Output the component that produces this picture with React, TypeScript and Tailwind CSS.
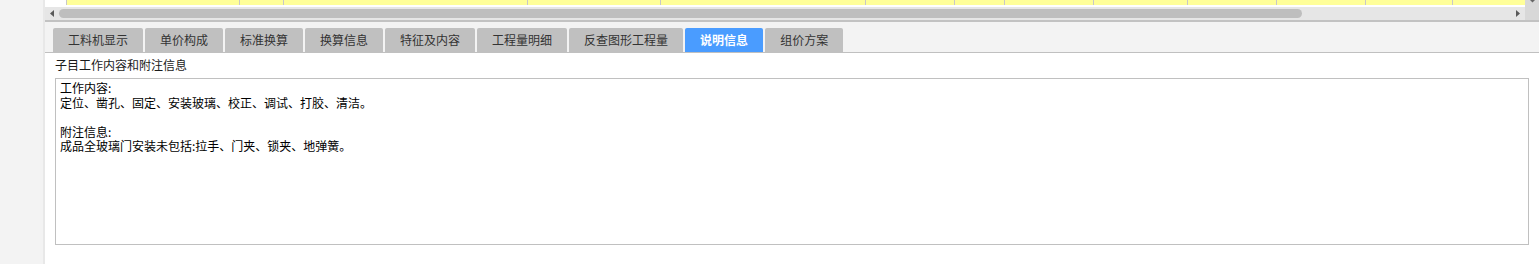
import React from "react";

const tabs = [
  "工料机显示",
  "单价构成",
  "标准换算",
  "换算信息",
  "特征及内容",
  "工程量明细",
  "反查图形工程量",
  "说明信息",
  "组价方案",
];

const cellClasses = [
  "w-[173px]",
  "w-[44px]",
  "w-[244px]",
  "w-[133px]",
  "w-[205px]",
  "w-[89px]",
  "w-[50px]",
  "w-[89px]",
  "w-[94px]",
  "w-[89px]",
  "w-[89px]",
  "w-[87px]",
];

export default function App() {
  return (
    <div className="flex h-[264px] w-[1539px] overflow-hidden bg-white font-['Noto_Sans_CJK_SC','Noto_Sans',sans-serif] text-[12px] text-black">
      <div className="h-full w-[45px] shrink-0 border-r-2 border-[#e8e8e8] bg-[#f3f3f3]" />
      <div className="flex min-w-0 flex-1 flex-col">
        <div className="flex h-[20px]">
          <div className="flex min-w-0 flex-1 flex-col">
            <div className="flex h-[5px] bg-[#ffff99]">
              <div className="h-full w-[22px] border-r border-[#c8c8c8] bg-white" />
              {cellClasses.map((c, i) => (
                <div key={i} className={`h-full ${c} border-r border-[#c8c8c8]`} />
              ))}
              <div className="h-full flex-1" />
            </div>
            <div className="h-[2px] bg-white" />
            <div className="flex h-[13px] items-center bg-[#e6e6e6]">
              <svg className="ml-[5px]" width="4" height="7" viewBox="0 0 4 7">
                <polygon points="4,0 0,3.5 4,7" fill="#5a5a5a" />
              </svg>
              <div className="ml-[5px] h-[9px] w-[1243px] rounded-full bg-[#bebebe]" />
              <div className="flex-1" />
              <svg className="mr-[5px]" width="4" height="7" viewBox="0 0 4 7">
                <polygon points="0,0 4,3.5 0,7" fill="#5a5a5a" />
              </svg>
            </div>
          </div>
          <div className="flex w-[14px] justify-center bg-[#d8d8d8]">
            <svg width="5" height="3" viewBox="0 0 5 3">
              <polygon points="0,0 5,0 2.5,2.5" fill="#666666" />
            </svg>
          </div>
        </div>
        <div className="h-[2px] bg-[#c2c2c2]" />
        <div className="flex h-[31px] items-end gap-[2px] border-b border-[#c0c0c0] bg-[#f3f3f3] pl-[8px]">
          {tabs.map((t) =>
            t === "说明信息" ? (
              <div
                key={t}
                className="h-[24px] rounded-t-[2px] bg-[#4a9cff] px-[15px] leading-[24px] font-bold text-white"
              >
                {t}
              </div>
            ) : (
              <div
                key={t}
                className="h-[24px] rounded-t-[2px] bg-[#c0c0c0] px-[15px] leading-[24px] text-[#333333]"
              >
                {t}
              </div>
            )
          )}
        </div>
        <div className="flex flex-col px-[10px]">
          <div className="mt-[5px] leading-[14px] text-[#1a1a1a]">子目工作内容和附注信息</div>
          <div className="mt-[6px] h-[167px] border border-[#c0c0c0] bg-white pl-[4px] pt-[2px] leading-[14.5px] whitespace-pre text-black">
            {"工作内容:\n定位、凿孔、固定、安装玻璃、校正、调试、打胶、清洁。\n\n附注信息:\n成品全玻璃门安装未包括:拉手、门夹、锁夹、地弹簧。"}
          </div>
        </div>
      </div>
    </div>
  );
}
